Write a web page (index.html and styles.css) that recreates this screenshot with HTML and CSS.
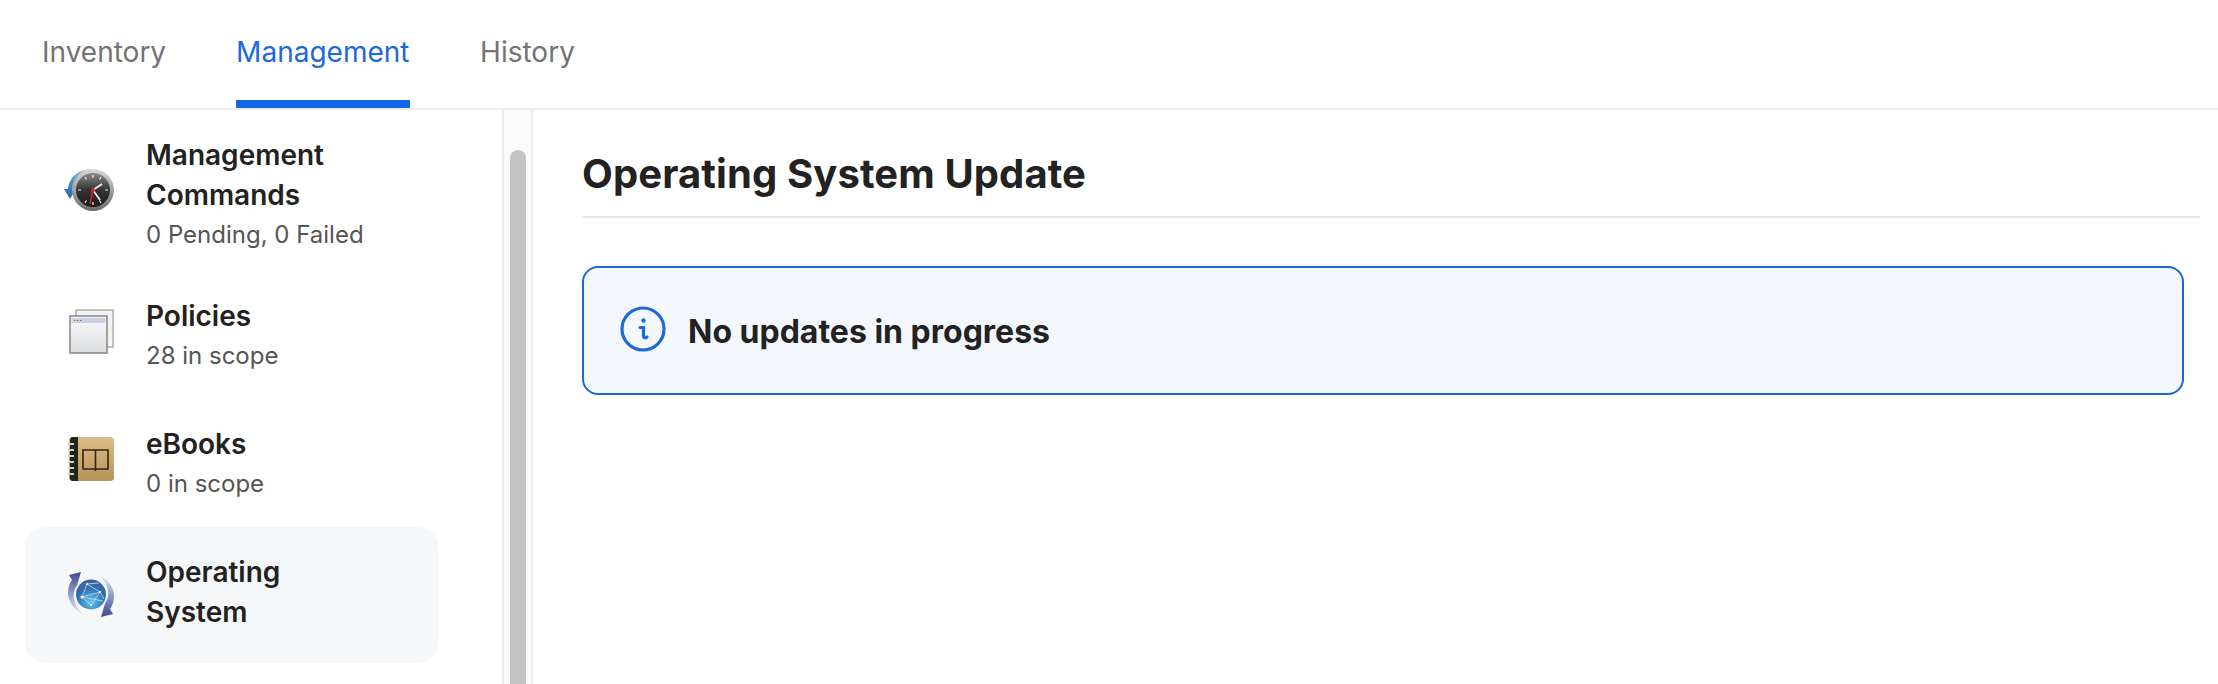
FILE: index.html
```html
<!DOCTYPE html>
<html lang="en">
<head>
  <meta charset="UTF-8">
  <title>Management</title>
  <link rel="stylesheet" href="styles.css">
</head>
<body>
  <nav class="tabs">
    <a class="tab" href="#">Inventory</a>
    <a class="tab tab-active" href="#">Management</a>
    <a class="tab" href="#">History</a>
  </nav>

  <div class="content">
    <aside class="sidebar">
      <ul class="side-list">
        <li class="side-item side-item-first">
          <svg class="side-icon" viewBox="0 0 48 48">
            <defs>
              <linearGradient id="clockRim" x1="0" y1="0" x2="0" y2="1">
                <stop offset="0" stop-color="#d8d8d8"/>
                <stop offset="1" stop-color="#6a6a6a"/>
              </linearGradient>
              <linearGradient id="clockFace" x1="0" y1="0" x2="0" y2="1">
                <stop offset="0" stop-color="#8a8a8a"/>
                <stop offset="0.5" stop-color="#333"/>
                <stop offset="1" stop-color="#1a1a1a"/>
              </linearGradient>
              <linearGradient id="clockArrow" x1="1" y1="0" x2="0" y2="1">
                <stop offset="0" stop-color="#a9d0ea"/>
                <stop offset="1" stop-color="#0d5ca6"/>
              </linearGradient>
            </defs>
            <path d="M-3 23H1C2 12 10 4 24 3V6C15 8 9 14 9 23L3 33Z" fill="url(#clockArrow)"/>
            <circle cx="26" cy="24" r="21" fill="url(#clockRim)"/>
            <circle cx="26" cy="24" r="17" fill="url(#clockFace)"/>
            <path d="M26 9V12M26 36V39M11 24H14M38 24H41M18 11L19.500 13.500M34 11L32.500 13.500M18 37L19.500 34.500M34 37L32.500 34.500" stroke="#eee" stroke-width="1.200"/>
            <path d="M26 24L35 18M26 24L33 34" stroke="#f2f2f2" stroke-width="1.800"/>
            <path d="M26 24L23 38" stroke="#d8232a" stroke-width="1.500"/>
            <circle cx="26" cy="24" r="2" fill="#d8232a"/>
          </svg>
          <div class="side-text">
            <div class="side-title">Management Commands</div>
            <div class="side-sub">0 Pending, 0 Failed</div>
          </div>
        </li>
        <li class="side-item">
          <svg class="side-icon" viewBox="0 0 48 48">
            <defs>
              <linearGradient id="windowBody" x1="0" y1="0" x2="0" y2="1">
                <stop offset="0" stop-color="#fafafa"/>
                <stop offset="1" stop-color="#dcdde0"/>
              </linearGradient>
            </defs>
            <rect x="9" y="3" width="37" height="37" fill="#f2f2f3" stroke="#9a9a9a" stroke-width="1.200"/>
            <rect x="3" y="9" width="37" height="37" fill="url(#windowBody)" stroke="#858585" stroke-width="1.500"/>
            <rect x="4.500" y="11" width="34" height="5" fill="#c8d2e2"/>
            <path d="M7 13.500H8.500M10 13.500H11.500M13 13.500H14.500" stroke="#777" stroke-width="1.200"/>
          </svg>
          <div class="side-text">
            <div class="side-title">Policies</div>
            <div class="side-sub">28 in scope</div>
          </div>
        </li>
        <li class="side-item">
          <svg class="side-icon" viewBox="0 0 48 48">
            <defs>
              <linearGradient id="bookCover" x1="0" y1="0" x2="0" y2="1">
                <stop offset="0" stop-color="#dcbd85"/>
                <stop offset="1" stop-color="#b8935a"/>
              </linearGradient>
            </defs>
            <rect x="2" y="2" width="45" height="44" rx="4" fill="url(#bookCover)"/>
            <path d="M6 2H11V46H6C4 46 3 45 3 43V5C3 3 4 2 6 2Z" fill="#26221c"/>
            <path d="M1 9H7M1 15H7M1 21H7M1 27H7M1 33H7M1 39H7" stroke="#cfcfcf" stroke-width="2"/>
            <path d="M16 15H41V34H16ZM28.500 15V36" fill="none" stroke="#2e2517" stroke-width="1.600"/>
          </svg>
          <div class="side-text">
            <div class="side-title">eBooks</div>
            <div class="side-sub">0 in scope</div>
          </div>
        </li>
        <li class="side-item side-item-active">
          <svg class="side-icon" viewBox="0 0 48 48">
            <defs>
              <radialGradient id="globeFill" cx="0.5" cy="0.75" r="0.8">
                <stop offset="0" stop-color="#62c6ee"/>
                <stop offset="0.6" stop-color="#2a6fae"/>
                <stop offset="1" stop-color="#4a5a9c"/>
              </radialGradient>
              <linearGradient id="arrowLeft" x1="0" y1="0" x2="0" y2="1">
                <stop offset="0" stop-color="#3d4a8f"/>
                <stop offset="0.5" stop-color="#8d9ccb"/>
                <stop offset="1" stop-color="#eef2f9"/>
              </linearGradient>
              <linearGradient id="arrowRight" x1="0" y1="1" x2="0" y2="0">
                <stop offset="0" stop-color="#3d4a8f"/>
                <stop offset="0.5" stop-color="#8d9ccb"/>
                <stop offset="1" stop-color="#eef2f9"/>
              </linearGradient>
            </defs>
            <path d="M14 1L2 4L5 9C-3 21 1 36 17 44C8 36 3 24 10 14.500Z" fill="url(#arrowLeft)"/>
            <path d="M34 46L46 43L43 38C51 26 47 11 31 3C40 11 45 23 38 32.500Z" fill="url(#arrowRight)"/>
            <circle cx="24" cy="23.500" r="15" fill="url(#globeFill)"/>
            <path d="M15 26L20 13L32 12M20 13L33 21L37 28M15 26L33 21M15 26L24 34L33 21M15 26L36 30" fill="none" stroke="#dcecf8" stroke-width="0.700"/>
            <circle cx="15" cy="26" r="1.500" fill="#fff"/>
            <circle cx="33" cy="21" r="1.100" fill="#fff"/>
            <circle cx="24" cy="34" r="1.100" fill="#fff"/>
            <circle cx="20" cy="13" r="1" fill="#fff"/>
          </svg>
          <div class="side-text">
            <div class="side-title">Operating System</div>
          </div>
        </li>
      </ul>
      <div class="scroll-track">
        <div class="scroll-thumb"></div>
      </div>
    </aside>

    <main class="main">
      <h1 class="page-title">Operating System Update</h1>
      <div class="alert">
        <svg class="alert-icon" viewBox="0 0 46 46">
          <circle cx="23" cy="23" r="21" fill="none" stroke="#1c68dc" stroke-width="3.200"/>
          <circle cx="23.500" cy="14.500" r="2.200" fill="#1c68dc"/>
          <path d="M20 21.500H23.500V30C23.500 32 25 32.500 27 31" fill="none" stroke="#1c68dc" stroke-width="3.200" stroke-linecap="round"/>
        </svg>
        <span class="alert-text">No updates in progress</span>
      </div>
    </main>
  </div>
</body>
</html>
```

FILE: styles.css
```css
* {
  margin: 0;
  padding: 0;
  box-sizing: border-box;
}

body {
  height: 684px;
  overflow: hidden;
  background: #fff;
  font-family: Inter, "Liberation Sans", sans-serif;
  color: #222;
}

/* Tabs */
.tabs {
  display: flex;
  gap: 70px;
  height: 110px;
  padding-left: 42px;
  border-bottom: 2px solid #ececec;
}

.tab {
  height: 108px;
  padding-top: 33px;
  color: #737373;
  font-size: 28px;
  line-height: 38px;
  text-decoration: none;
  border-bottom: 8px solid transparent;
}

.tab-active {
  width: 174px;
  color: #1c68dc;
  border-bottom-color: #1565e8;
}

/* Sidebar */
.content {
  display: flex;
  height: 574px;
}

.sidebar {
  display: flex;
  flex: none;
  width: 533px;
}

.side-list {
  list-style: none;
  flex: 1;
  padding-left: 25px;
  padding-right: 64px;
}

.side-item {
  display: flex;
  align-items: center;
  gap: 31px;
  padding: 25px 0 27px 42px;
  border-radius: 20px;
}

.side-item-first {
  padding-bottom: 20px;
}

.side-item-active {
  padding: 25px 0 31px 42px;
  background: #f6f7f9;
}

.side-icon {
  flex: none;
  width: 48px;
  height: 48px;
  margin-bottom: 6px;
  overflow: visible;
}

.side-item-active .side-icon {
  margin-top: 6px;
  margin-bottom: 0;
}

.side-text {
  max-width: 232px;
}

.side-title {
  font-size: 28px;
  font-weight: 600;
  line-height: 40px;
  color: #222;
}

.side-sub {
  margin-top: 4px;
  font-size: 24px;
  line-height: 32px;
  color: #555;
}

.scroll-track {
  flex: none;
  width: 31px;
  padding: 40px 5px 0 6px;
  background: #fafafa;
  border-left: 2px solid #ececec;
  border-right: 2px solid #ececec;
}

.scroll-thumb {
  height: 100%;
  background: #c3c3c3;
  border-radius: 8px 8px 0 0;
}

/* Main panel */
.main {
  flex: 1;
  padding: 0 18px 0 49px;
}

.page-title {
  height: 108px;
  padding-top: 40px;
  font-size: 40px;
  font-weight: 700;
  line-height: 48px;
  letter-spacing: 0.1px;
  color: #222;
  border-bottom: 2px solid #e8e8e8;
}

.alert {
  display: flex;
  align-items: center;
  gap: 22px;
  height: 129px;
  margin-top: 48px;
  margin-right: 16px;
  padding-left: 36px;
  background: #f4f8fe;
  border: 2px solid #1f66cf;
  border-radius: 16px;
}

.alert-icon {
  flex: none;
  width: 46px;
  height: 46px;
  margin-bottom: 4px;
}

.alert-text {
  margin-top: 2px;
  font-size: 32px;
  font-weight: 700;
  color: #222;
}
```
